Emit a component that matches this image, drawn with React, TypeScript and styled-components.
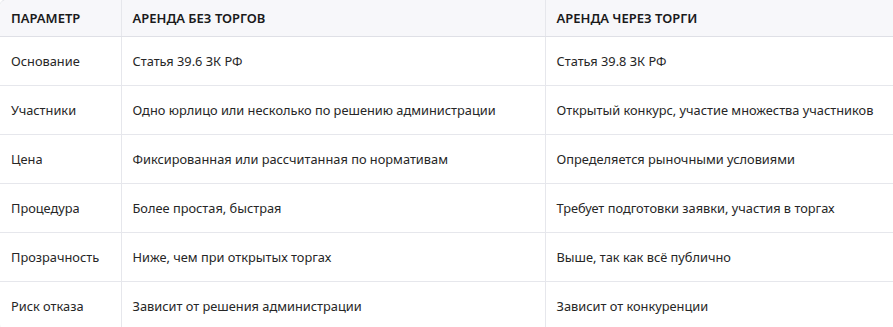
import React from 'react'
import styled, { createGlobalStyle } from 'styled-components'

const GlobalStyle = createGlobalStyle`
  html, body {
    margin: 0;
    padding: 0;
    background: #ffffff;
    overflow: hidden;
  }
  body {
    font-family: 'Noto Sans', 'Open Sans', Arial, sans-serif;
    color: #1f1f1f;
  }
`

const Wrapper = styled.div`
  width: 910px;
  border: 1px solid #e6e7ec;
  border-left: 1px solid #eeeff3;
  border-radius: 8px;
  overflow: hidden;
  margin-left: -1px;
  margin-top: -1px;
`

const Table = styled.table`
  width: 100%;
  border-collapse: collapse;
  table-layout: fixed;
`

const HeadCell = styled.th<{ $w?: number }>`
  width: ${p => (p.$w ? `${p.$w}px` : 'auto')};
  height: 36px;
  box-sizing: border-box;
  padding: 0 12px 0 11px;
  background: #f7f7fa;
  text-align: left;
  font-size: 13px;
  font-weight: 600;
  text-transform: uppercase;
  color: #1a1a1a;
  border-bottom: 1px solid #dfe0e6;
  border-right: 1px solid #e6e7ec;
  vertical-align: middle;
`

const Cell = styled.td`
  height: 49px;
  box-sizing: border-box;
  padding: 0 12px 0 11px;
  font-size: 12.8px;
  color: #262626;
  border-bottom: 1px solid #e6e7ec;
  border-right: 1px solid #e6e7ec;
  vertical-align: middle;
  white-space: nowrap;
`

const rows = [
  ['Основание', 'Статья 39.6 ЗК РФ', 'Статья 39.8 ЗК РФ'],
  ['Участники', 'Одно юрлицо или несколько по решению администрации', 'Открытый конкурс, участие множества участников'],
  ['Цена', 'Фиксированная или рассчитанная по нормативам', 'Определяется рыночными условиями'],
  ['Процедура', 'Более простая, быстрая', 'Требует подготовки заявки, участия в торгах'],
  ['Прозрачность', 'Ниже, чем при открытых торгах', 'Выше, так как всё публично'],
  ['Риск отказа', 'Зависит от решения администрации', 'Зависит от конкуренции'],
]

const App = () => (
  <>
    <GlobalStyle />
    <Wrapper>
      <Table>
        <thead>
          <tr>
            <HeadCell $w={121}>Параметр</HeadCell>
            <HeadCell $w={424}>Аренда без торгов</HeadCell>
            <HeadCell>Аренда через торги</HeadCell>
          </tr>
        </thead>
        <tbody>
          {rows.map(r => (
            <tr key={r[0]}>
              {r.map((c, i) => (
                <Cell key={i}>{c}</Cell>
              ))}
            </tr>
          ))}
        </tbody>
      </Table>
    </Wrapper>
  </>
)

export default App
